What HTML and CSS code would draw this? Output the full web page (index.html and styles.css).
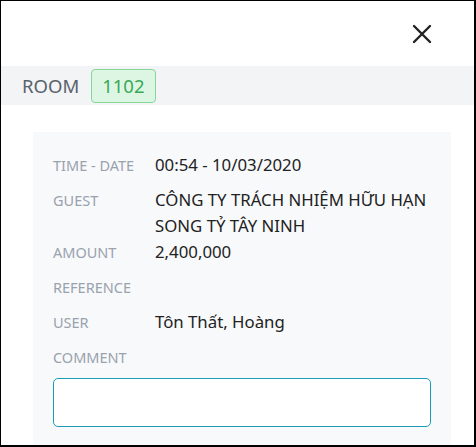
FILE: index.html
```html
<!DOCTYPE html>
<html lang="vi">
<head>
    <meta charset="UTF-8">
    <meta name="viewport" content="width=device-width, initial-scale=1.0">
    <title>Room 1102</title>
    <link rel="stylesheet" href="styles.css">
</head>
<body>
    <div class="panel">
        <div class="header">
            <button class="cerrar" aria-label="Close">
                <svg width="20" height="20" viewBox="0 0 20 20">
                    <path d="M2 2 L18 18 M18 2 L2 18" stroke="#222" stroke-width="2.4" stroke-linecap="round" fill="none"/>
                </svg>
            </button>
        </div>
        <div class="room">
            <span class="room-label">ROOM</span>
            <span class="badge">1102</span>
        </div>
        <div class="tarjeta">
            <div class="fila">
                <div class="etiqueta">TIME - DATE</div>
                <div class="valor">00:54 - 10/03/2020</div>
            </div>
            <div class="fila">
                <div class="etiqueta">GUEST</div>
                <div class="valor">CÔNG TY TRÁCH NHIỆM HỮU HẠN SONG TỶ TÂY NINH</div>
            </div>
            <div class="fila">
                <div class="etiqueta">AMOUNT</div>
                <div class="valor">2,400,000</div>
            </div>
            <div class="fila">
                <div class="etiqueta">REFERENCE</div>
                <div class="valor"></div>
            </div>
            <div class="fila">
                <div class="etiqueta">USER</div>
                <div class="valor">Tôn Thất, Hoàng</div>
            </div>
            <div class="fila">
                <div class="etiqueta">COMMENT</div>
            </div>
            <textarea class="comentario"></textarea>
        </div>
    </div>
</body>
</html>
```

FILE: styles.css
```css
html, body {
    margin: 0;
    padding: 0;
    height: 100%;
    overflow: hidden;
}
body {
    font-family: "Noto Sans", Arial, sans-serif;
    background: white;
    color: #222;
}
.panel {
    box-sizing: border-box;
    height: 447px;
    border: 1px solid #000;
    border-right-width: 2px;
    border-bottom-width: 2px;
    overflow: hidden;
}
.header {
    height: 65px;
    display: flex;
    justify-content: flex-end;
    align-items: center;
    padding-right: 42px;
}
.cerrar {
    background: none;
    border: none;
    padding: 0;
    width: 20px;
    height: 20px;
    margin-top: 1px;
    cursor: pointer;
}
.cerrar svg {
    display: block;
}
.room {
    height: 39px;
    background: #f3f4f6;
    display: flex;
    align-items: center;
    padding-left: 21px;
}
.room-label {
    font-size: 18.5px;
    color: #59626d;
    margin-right: 12px;
}
.badge {
    box-sizing: border-box;
    height: 34px;
    padding: 0 10px;
    display: flex;
    align-items: center;
    font-size: 18.5px;
    color: #3aa957;
    background: #ddf6e3;
    border: 1px solid #86d69a;
    border-radius: 4px;
}
.tarjeta {
    margin: 27px 23px 0 32px;
    background: #f8f9fb;
    padding: 20px 20px 30px 20px;
}
.fila {
    display: flex;
    align-items: baseline;
    min-height: 35px;
}
.etiqueta {
    width: 102px;
    flex-shrink: 0;
    font-size: 14.5px;
    line-height: 26px;
    color: #99a2ad;
}
.valor {
    font-size: 16.8px;
    line-height: 26px;
    color: #222;
}
.comentario {
    display: block;
    box-sizing: border-box;
    width: 100%;
    height: 49px;
    margin-top: -1px;
    border: 1px solid #1b9db8;
    border-radius: 5px;
    background: white;
    resize: none;
    font-family: inherit;
}
```
